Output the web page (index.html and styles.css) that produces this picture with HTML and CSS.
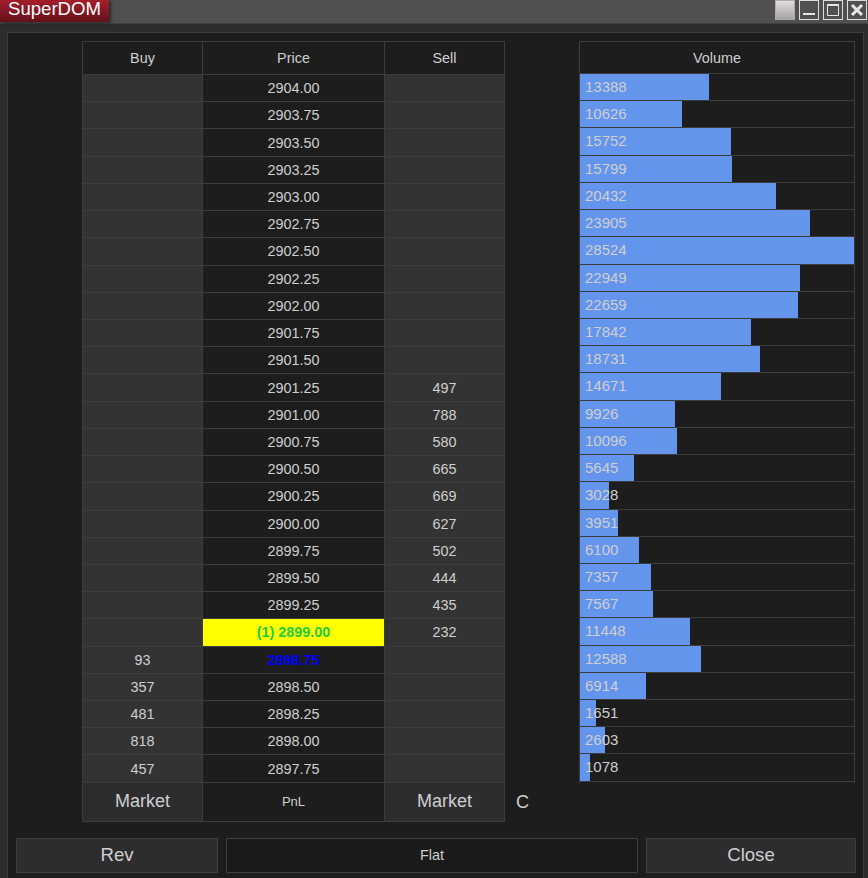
FILE: index.html
```html
<!DOCTYPE html>
<html lang="en">
<head>
    <meta charset="UTF-8">
    <title>SuperDOM</title>
    <link rel="stylesheet" href="styles.css">
</head>
<body>
    <div class="titlebar">
        <div class="app-name">SuperDOM</div>
        <div class="window-buttons">
            <div class="win-btn win-color"></div>
            <div class="win-btn">
                <svg width="18" height="18" viewBox="0 0 18 18"><rect x="3" y="12" width="12" height="2" fill="#e6e6e6"/></svg>
            </div>
            <div class="win-btn">
                <svg width="18" height="18" viewBox="0 0 18 18"><path d="M3.5 3.5h11v11h-11z M3 4.5h12" fill="none" stroke="#e6e6e6" stroke-width="1"/><rect x="3" y="3" width="12" height="2" fill="#e6e6e6"/></svg>
            </div>
            <div class="win-btn">
                <svg width="18" height="18" viewBox="0 0 18 18"><path d="M4 4l10 10M14 4L4 14" fill="none" stroke="#e6e6e6" stroke-width="3"/></svg>
            </div>
        </div>
    </div>

    <div class="panel">
        <div class="dom">
            <div class="ladder">
                <div class="row head"><div class="cell">Buy</div><div class="cell">Price</div><div class="cell">Sell</div></div>
                <div class="row"><div class="cell side"></div><div class="cell">2904.00</div><div class="cell side"></div></div>
                <div class="row"><div class="cell side"></div><div class="cell">2903.75</div><div class="cell side"></div></div>
                <div class="row"><div class="cell side"></div><div class="cell">2903.50</div><div class="cell side"></div></div>
                <div class="row"><div class="cell side"></div><div class="cell">2903.25</div><div class="cell side"></div></div>
                <div class="row"><div class="cell side"></div><div class="cell">2903.00</div><div class="cell side"></div></div>
                <div class="row"><div class="cell side"></div><div class="cell">2902.75</div><div class="cell side"></div></div>
                <div class="row"><div class="cell side"></div><div class="cell">2902.50</div><div class="cell side"></div></div>
                <div class="row"><div class="cell side"></div><div class="cell">2902.25</div><div class="cell side"></div></div>
                <div class="row"><div class="cell side"></div><div class="cell">2902.00</div><div class="cell side"></div></div>
                <div class="row"><div class="cell side"></div><div class="cell">2901.75</div><div class="cell side"></div></div>
                <div class="row"><div class="cell side"></div><div class="cell">2901.50</div><div class="cell side"></div></div>
                <div class="row"><div class="cell side"></div><div class="cell">2901.25</div><div class="cell side">497</div></div>
                <div class="row"><div class="cell side"></div><div class="cell">2901.00</div><div class="cell side">788</div></div>
                <div class="row"><div class="cell side"></div><div class="cell">2900.75</div><div class="cell side">580</div></div>
                <div class="row"><div class="cell side"></div><div class="cell">2900.50</div><div class="cell side">665</div></div>
                <div class="row"><div class="cell side"></div><div class="cell">2900.25</div><div class="cell side">669</div></div>
                <div class="row"><div class="cell side"></div><div class="cell">2900.00</div><div class="cell side">627</div></div>
                <div class="row"><div class="cell side"></div><div class="cell">2899.75</div><div class="cell side">502</div></div>
                <div class="row"><div class="cell side"></div><div class="cell">2899.50</div><div class="cell side">444</div></div>
                <div class="row"><div class="cell side"></div><div class="cell">2899.25</div><div class="cell side">435</div></div>
                <div class="row"><div class="cell side"></div><div class="cell last-trade">(1) 2899.00</div><div class="cell side">232</div></div>
                <div class="row"><div class="cell side">93</div><div class="cell best-bid">2898.75</div><div class="cell side"></div></div>
                <div class="row"><div class="cell side">357</div><div class="cell">2898.50</div><div class="cell side"></div></div>
                <div class="row"><div class="cell side">481</div><div class="cell">2898.25</div><div class="cell side"></div></div>
                <div class="row"><div class="cell side">818</div><div class="cell">2898.00</div><div class="cell side"></div></div>
                <div class="row"><div class="cell side">457</div><div class="cell">2897.75</div><div class="cell side"></div></div>
                <div class="row foot"><div class="cell side big">Market</div><div class="cell pnl">PnL</div><div class="cell side big">Market</div></div>
            </div>

            <div class="cancel">C</div>

            <div class="volume">
                <div class="vol-head">Volume</div>
                <div class="vol-row"><div class="bar" style="width:46.94%"></div><span>13388</span></div>
                <div class="vol-row"><div class="bar" style="width:37.25%"></div><span>10626</span></div>
                <div class="vol-row"><div class="bar" style="width:55.22%"></div><span>15752</span></div>
                <div class="vol-row"><div class="bar" style="width:55.39%"></div><span>15799</span></div>
                <div class="vol-row"><div class="bar" style="width:71.63%"></div><span>20432</span></div>
                <div class="vol-row"><div class="bar" style="width:83.81%"></div><span>23905</span></div>
                <div class="vol-row"><div class="bar" style="width:100%"></div><span>28524</span></div>
                <div class="vol-row"><div class="bar" style="width:80.46%"></div><span>22949</span></div>
                <div class="vol-row"><div class="bar" style="width:79.44%"></div><span>22659</span></div>
                <div class="vol-row"><div class="bar" style="width:62.55%"></div><span>17842</span></div>
                <div class="vol-row"><div class="bar" style="width:65.67%"></div><span>18731</span></div>
                <div class="vol-row"><div class="bar" style="width:51.43%"></div><span>14671</span></div>
                <div class="vol-row"><div class="bar" style="width:34.8%"></div><span>9926</span></div>
                <div class="vol-row"><div class="bar" style="width:35.39%"></div><span>10096</span></div>
                <div class="vol-row"><div class="bar" style="width:19.79%"></div><span>5645</span></div>
                <div class="vol-row"><div class="bar" style="width:10.62%"></div><span>3028</span></div>
                <div class="vol-row"><div class="bar" style="width:13.85%"></div><span>3951</span></div>
                <div class="vol-row"><div class="bar" style="width:21.39%"></div><span>6100</span></div>
                <div class="vol-row"><div class="bar" style="width:25.79%"></div><span>7357</span></div>
                <div class="vol-row"><div class="bar" style="width:26.53%"></div><span>7567</span></div>
                <div class="vol-row"><div class="bar" style="width:40.13%"></div><span>11448</span></div>
                <div class="vol-row"><div class="bar" style="width:44.13%"></div><span>12588</span></div>
                <div class="vol-row"><div class="bar" style="width:24.24%"></div><span>6914</span></div>
                <div class="vol-row"><div class="bar" style="width:5.79%"></div><span>1651</span></div>
                <div class="vol-row"><div class="bar" style="width:9.13%"></div><span>2603</span></div>
                <div class="vol-row"><div class="bar" style="width:3.78%"></div><span>1078</span></div>
            </div>
        </div>

        <div class="actions">
            <button class="action rev">Rev</button>
            <button class="action flat">Flat</button>
            <button class="action close">Close</button>
        </div>
    </div>
</body>
</html>
```

FILE: styles.css
```css
body {
    font-family: "Liberation Sans", Arial, sans-serif;
    background-color: #2d2d30;
    color: #cfcfcf;
    margin: 0;
    padding: 0;
    height: 878px;
    overflow: hidden;
}

/* title bar */
.titlebar {
    display: flex;
    justify-content: space-between;
    height: 23px;
    background-color: #505050;
    border-bottom: 1px solid #3f3f41;
}
.app-name {
    width: 101px;
    height: 22px;
    padding-left: 8px;
    background: linear-gradient(#a41e2b, #63101a);
    box-shadow: 2px 1px 3px rgba(0, 0, 0, 0.5);
    color: #ffffff;
    font-size: 18.6px;
    line-height: 17px;
}
.window-buttons {
    display: flex;
    gap: 4px;
    padding-right: 1px;
}
.win-btn {
    width: 18px;
    height: 18px;
    border: 1px solid #dcdcdc;
}
.win-color {
    background: linear-gradient(#e0dcdc, #a8a4a4);
    border-color: #b0acac;
}

/* main panel */
.panel {
    margin: 8px 4px 0 7px;
    height: 860px;
    box-sizing: border-box;
    padding: 8px 0 0 8px;
    background-color: #1d1d1d;
    border: 1px solid #3c3c3f;
    border-bottom: none;
}
.dom {
    display: flex;
    padding-left: 66px;
}
.ladder {
    width: 423px;
    box-sizing: border-box;
    border-top: 1px solid #3c3c3c;
    border-left: 1px solid #3c3c3c;
}
.row {
    display: grid;
    grid-template-columns: 120px 182px 120px;
    height: 27.23px;
    box-sizing: border-box;
}
.row.head {
    height: 33px;
}
.row.foot {
    height: 39px;
}
.cell {
    display: flex;
    align-items: center;
    justify-content: center;
    box-sizing: border-box;
    border-right: 1px solid #3c3c3c;
    border-bottom: 1px solid #3c3c3c;
    font-size: 14.4px;
}
.side {
    background-color: #333333;
}
.big {
    background-color: #2d2d30;
    font-size: 18px;
}
.pnl {
    font-size: 13px;
}
.last-trade {
    background-color: #ffff00;
    color: #22cc44;
    font-weight: bold;
}
.best-bid {
    color: #0000ff;
    font-weight: bold;
}

.cancel {
    align-self: flex-end;
    width: 74px;
    height: 39px;
    box-sizing: border-box;
    padding-left: 11px;
    font-size: 18px;
    line-height: 39px;
}

/* volume column */
.volume {
    width: 276px;
    box-sizing: border-box;
    height: 742px;
    border: 1px solid #3c3c3c;
    border-bottom: none;
}
.vol-head {
    height: 32px;
    box-sizing: border-box;
    border-bottom: 1px solid #3c3c3c;
    text-align: center;
    font-size: 14.4px;
    line-height: 32px;
}
.vol-row {
    position: relative;
    height: 27.23px;
    box-sizing: border-box;
    border-bottom: 1px solid #3c3c3c;
}
.bar {
    height: 100%;
    background-color: #6495ed;
}
.vol-row span {
    position: absolute;
    top: 0;
    left: 5px;
    font-size: 15px;
    line-height: 26px;
}

/* bottom buttons */
.actions {
    display: flex;
    gap: 8px;
    margin-top: 16px;
}
.action {
    height: 35px;
    box-sizing: border-box;
    padding: 0;
    color: #cfcfcf;
    font-family: "Liberation Sans", Arial, sans-serif;
    font-size: 18.6px;
    background-color: #2d2d30;
    border: 1px solid #3f3f41;
}
.rev {
    width: 202px;
}
.flat {
    width: 412px;
    background-color: #1a1a1a;
    font-size: 14.4px;
}
.close {
    width: 210px;
}
```
